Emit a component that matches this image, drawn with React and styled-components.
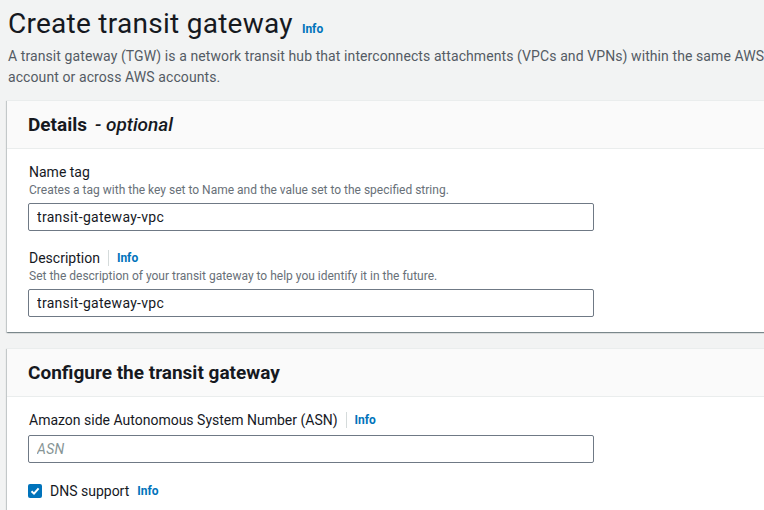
import React from 'react';
import styled, { createGlobalStyle } from 'styled-components';

const GlobalStyle = createGlobalStyle`
	html, body {
		margin: 0;
		padding: 0;
		background: #f2f3f3;
		overflow: hidden;
	}
	body {
		font-family: Roboto, "Liberation Sans", sans-serif;
		color: #16191f;
	}
`;

const Page = styled.div`
	padding: 0 0 0 7px;
	width: 900px;
`;

const PageHeader = styled.div`
	padding: 7px 0 0 1px;
	margin-bottom: 12px;
`;

const Title = styled.h1`
	margin: 0;
	font-size: 28px;
	line-height: 34px;
	font-weight: 400;
	letter-spacing: 0.27px;
	color: #16191f;
	display: flex;
	align-items: baseline;
`;

const InfoLink = styled.a`
	font-size: 12px;
	font-weight: 700;
	letter-spacing: 0;
	color: #0073bb;
	text-decoration: none;
	margin-left: ${(p) => p.gap || 0}px;
`;

const Lead = styled.p`
	margin: 0;
	font-size: 14px;
	line-height: 21px;
	letter-spacing: 0.09px;
	color: #545b64;
	width: 800px;
`;

const Panel = styled.section`
	background: #fff;
	border-top: 1px solid #eaeded;
	box-shadow: 0 1px 1px 0 rgba(0, 28, 36, 0.3), 1px 1px 1px 0 rgba(0, 28, 36, 0.15),
		-1px 1px 1px 0 rgba(0, 28, 36, 0.15);
	margin-bottom: 16px;
	width: 880px;
`;

const PanelHeader = styled.div`
	height: 47px;
	background: #fafafa;
	border-bottom: 1px solid #eaeded;
	padding: 0 20px 0 21px;
	display: flex;
	align-items: center;
`;

const PanelTitle = styled.h2`
	margin: 0;
	font-size: 19px;
	font-weight: 700;
	line-height: 22px;
	color: #16191f;

	i {
		font-weight: 500;
		margin-left: 8px;
	}
`;

const PanelBody = styled.div`
	padding: 13px 20px 15px 21px;
	display: flex;
	flex-direction: column;
	gap: 17px;
`;

const Field = styled.div`
	display: flex;
	flex-direction: column;
`;

const Label = styled.div`
	font-size: 14px;
	line-height: 20px;
	color: #16191f;
	display: flex;
	align-items: center;
	padding-left: 1px;
`;

const LabelInfo = styled.span`
	display: inline-flex;
	align-items: center;
	margin-left: 8px;
	padding-left: 8px;
	border-left: 1px solid #d5dbdb;
	height: 16px;
`;

const Hint = styled.div`
	font-size: 12px;
	line-height: 16px;
	color: #687078;
	padding-left: 1px;
`;

const Input = styled.input`
	box-sizing: border-box;
	width: 566px;
	height: 28px;
	margin-top: 5px;
	padding: 0 8px;
	border: 1px solid #6f7985;
	border-radius: 2px;
	font-family: inherit;
	font-size: 14px;
	letter-spacing: 0.3px;
	color: #16191f;
	background: #fff;
	outline: none;

	&::placeholder {
		color: #879596;
		font-style: italic;
	}
`;

const CheckRow = styled.label`
	display: flex;
	align-items: center;
	font-size: 14px;
	line-height: 20px;
	gap: 8px;
	padding-top: 1px;
`;

const Box = styled.span`
	width: 14px;
	height: 14px;
	border-radius: 2px;
	background: #0073bb;
	display: inline-flex;
	align-items: center;
	justify-content: center;
`;

const Check = () => (
	<Box>
		<svg width='10' height='10' viewBox='0 0 10 10'>
			<path d='M1.5 5.2 L4 7.6 L8.6 2.4' fill='none' stroke='#fff' strokeWidth='2' />
		</svg>
	</Box>
);

const App = () => {
	return (
		<Page>
			<GlobalStyle />
			<PageHeader>
				<Title>
					Create transit gateway
					<InfoLink gap={9}>Info</InfoLink>
				</Title>
				<Lead>
					A transit gateway (TGW) is a network transit hub that interconnects attachments (VPCs and VPNs) within the same AWS
					account or across AWS accounts.
				</Lead>
			</PageHeader>

			<Panel>
				<PanelHeader>
					<PanelTitle>
						Details<i>- optional</i>
					</PanelTitle>
				</PanelHeader>
				<PanelBody>
					<Field>
						<Label>Name tag</Label>
						<Hint>Creates a tag with the key set to Name and the value set to the specified string.</Hint>
						<Input defaultValue='transit-gateway-vpc' />
					</Field>
					<Field>
						<Label>
							Description
							<LabelInfo>
								<InfoLink>Info</InfoLink>
							</LabelInfo>
						</Label>
						<Hint>Set the description of your transit gateway to help you identify it in the future.</Hint>
						<Input defaultValue='transit-gateway-vpc' />
					</Field>
				</PanelBody>
			</Panel>

			<Panel>
				<PanelHeader>
					<PanelTitle>Configure the transit gateway</PanelTitle>
				</PanelHeader>
				<PanelBody>
					<Field>
						<Label>
							Amazon side Autonomous System Number (ASN)
							<LabelInfo>
								<InfoLink>Info</InfoLink>
							</LabelInfo>
						</Label>
						<Input placeholder='ASN' />
					</Field>
					<CheckRow>
						<Check />
						DNS support
						<InfoLink>Info</InfoLink>
					</CheckRow>
				</PanelBody>
			</Panel>
		</Page>
	);
};

export default App;
